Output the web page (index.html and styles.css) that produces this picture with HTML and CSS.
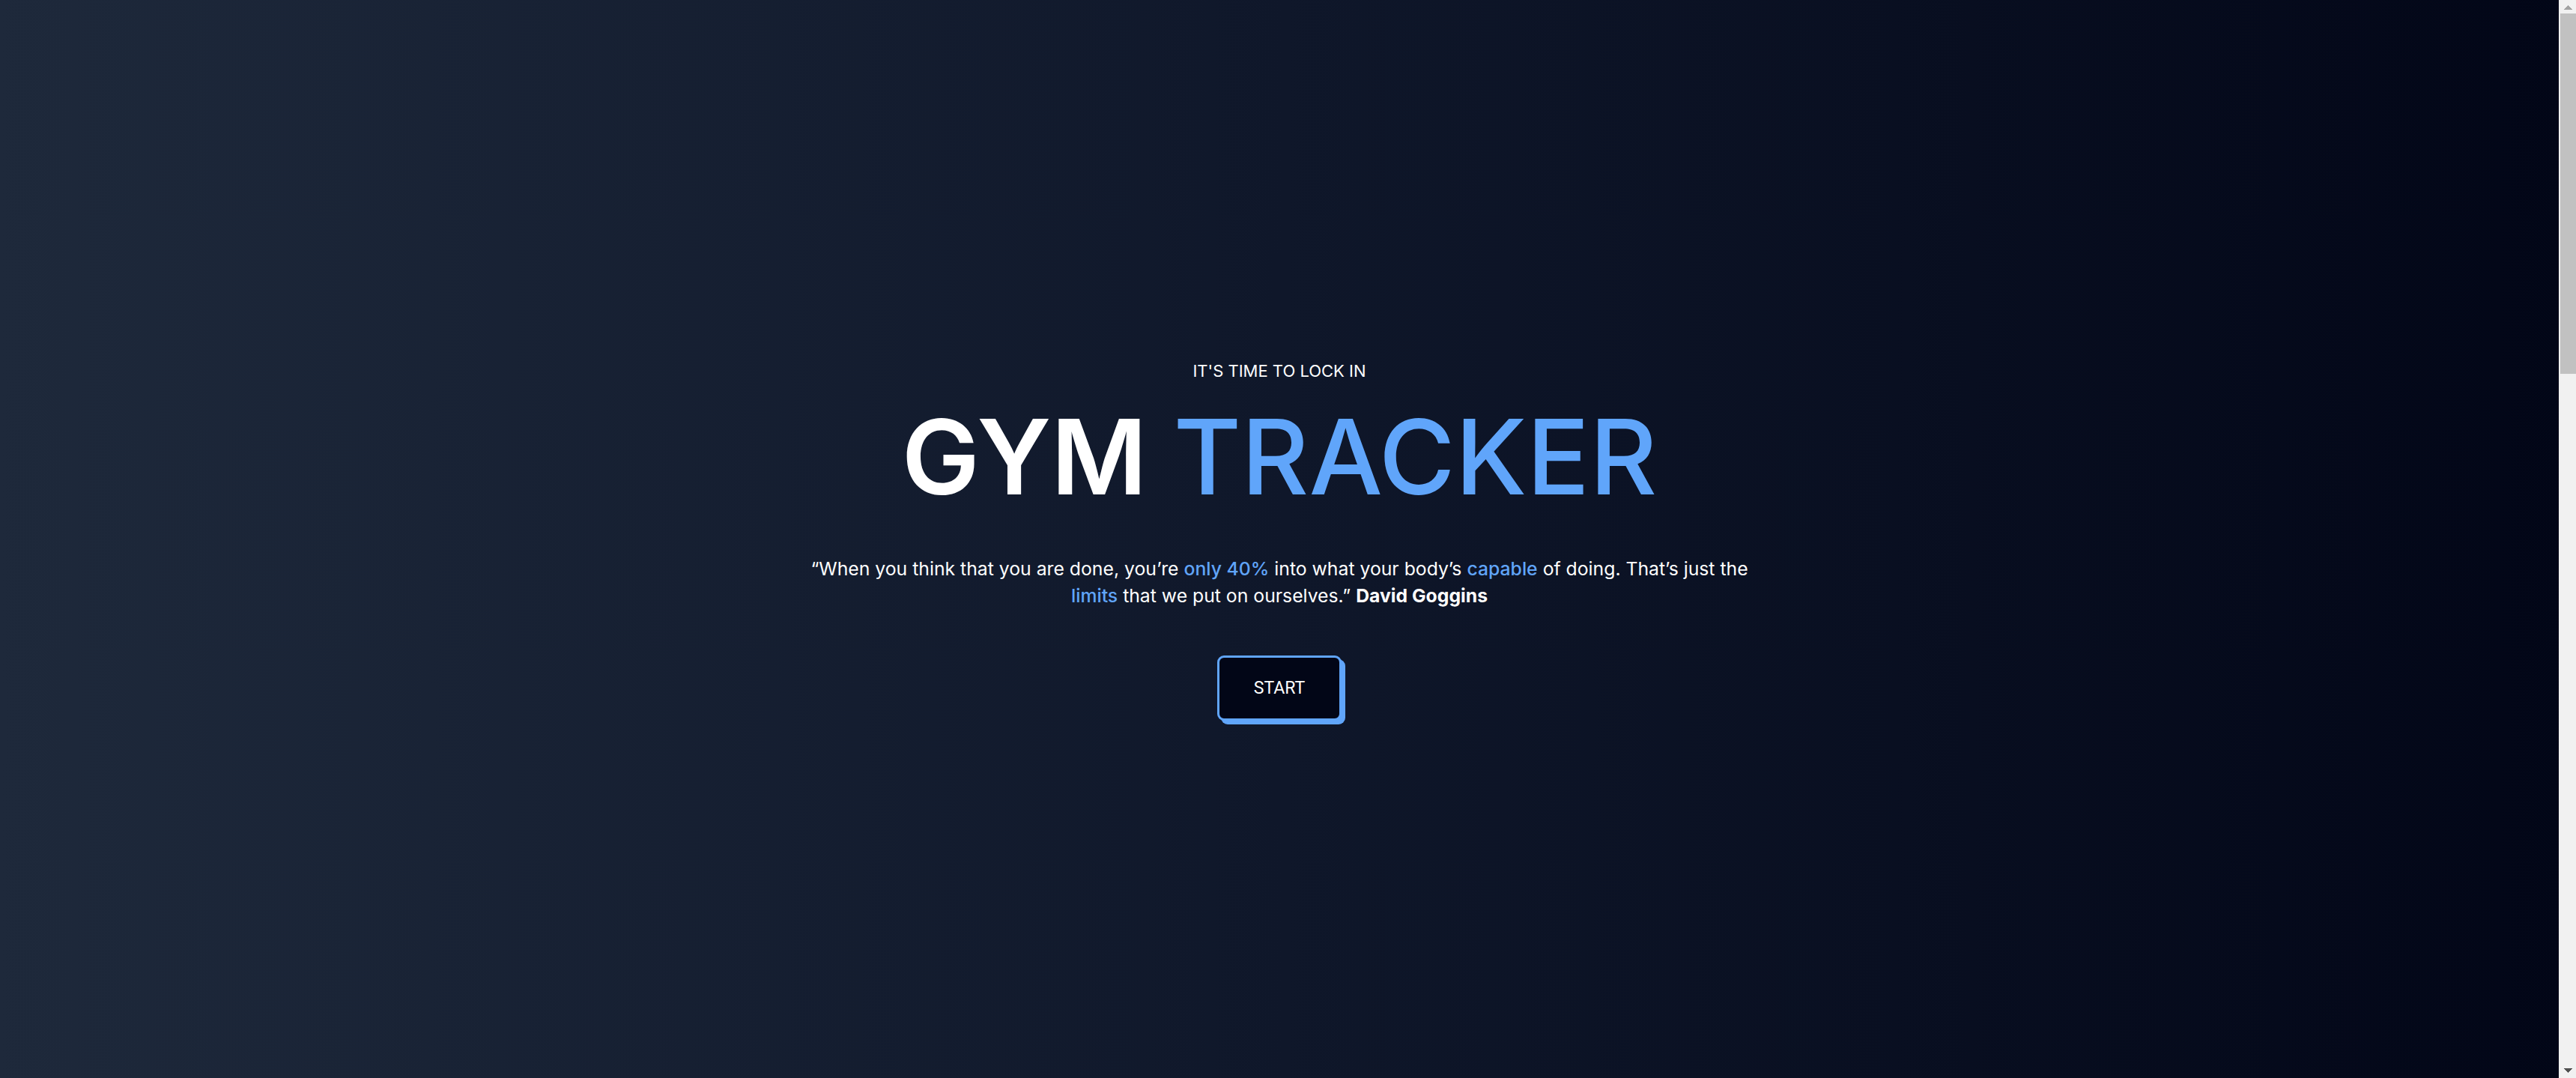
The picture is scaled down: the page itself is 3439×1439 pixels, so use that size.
FILE: index.html
```html
<!DOCTYPE html>
<html lang="en">
<head>
<meta charset="utf-8">
<title>Gym Tracker</title>
<link rel="stylesheet" href="styles.css">
</head>
<body>
<main class="page">
  <section class="hero">
    <p class="eyebrow">IT'S TIME TO LOCK IN</p>
    <h1 class="title"><span class="title-main">GYM</span> <span class="title-accent">TRACKER</span></h1>
    <p class="quote">“When you think that you are done, you’re <span class="hl">only 40%</span> into what your body’s <span class="hl">capable</span> of doing. That’s just the <span class="hl">limits</span> that we put on ourselves.” <strong class="author">David Goggins</strong></p>
    <button class="start" type="button">START</button>
  </section>
</main>
<div class="scrollbar" aria-hidden="true">
  <div class="sb-arrow sb-up"></div>
  <div class="sb-track"><div class="sb-thumb"></div></div>
  <div class="sb-arrow sb-down"></div>
</div>
</body>
</html>
```
FILE: styles.css
```css
html, body {
  margin: 0;
  padding: 0;
}
body {
  background: linear-gradient(to right, #1e293b 0%, #0f172a 50%, #020617 100%);
  color: #ffffff;
  font-family: Inter, "Open Sans", sans-serif;
  overflow: hidden;
}
.page {
  display: flex;
  flex-direction: column;
  padding-right: 23px;
}
.hero {
  height: 100vh;
  display: flex;
  flex-direction: column;
  align-items: center;
  justify-content: center;
  text-align: center;
}
.eyebrow {
  margin: 0 0 27px;
  font-size: 22px;
  line-height: 36px;
  font-weight: 400;
  color: #ffffff;
}
.title {
  margin: 0 0 62px;
  font-size: 139px;
  line-height: 1;
  font-weight: 600;
  letter-spacing: 0;
}
.title-main {
  color: #ffffff;
  font-weight: 600;
}
.title-accent {
  color: #60a5fa;
  font-weight: 500;
}
.quote {
  margin: 0 0 62px;
  max-width: 1290px;
  font-size: 24.75px;
  line-height: 36px;
  font-weight: 400;
  color: #ffffff;
}
.hl {
  color: #60a5fa;
  font-weight: 500;
}
.author {
  font-weight: 700;
  color: #ffffff;
}
.start {
  font-family: Roboto, "Liberation Sans", sans-serif;
  font-size: 23px;
  line-height: 27px;
  color: #ffffff;
  background: #020617;
  border: 3px solid #60a5fa;
  border-radius: 9px;
  padding: 27px 46px;
  box-shadow: 5px 5px 0 #60a5fa;
  cursor: pointer;
}
.scrollbar {
  position: fixed;
  top: 0;
  right: 0;
  bottom: 0;
  width: 23px;
  background: #f1f1f1;
  display: flex;
  flex-direction: column;
}
.sb-arrow {
  height: 18px;
  flex: none;
  background-repeat: no-repeat;
  background-size: 11px 6px;
}
.sb-up {
  background-image: conic-gradient(from 135deg at 50% 0%, #a3a3a3 90deg, transparent 0);
  background-position: 7px 7px;
}
.sb-down {
  background-image: conic-gradient(from -45deg at 50% 100%, #505050 90deg, transparent 0);
  background-position: 7px 5px;
}
.sb-track {
  flex: 1;
  padding-left: 2px;
}
.sb-thumb {
  height: 481px;
  background: #c1c1c1;
}
```
